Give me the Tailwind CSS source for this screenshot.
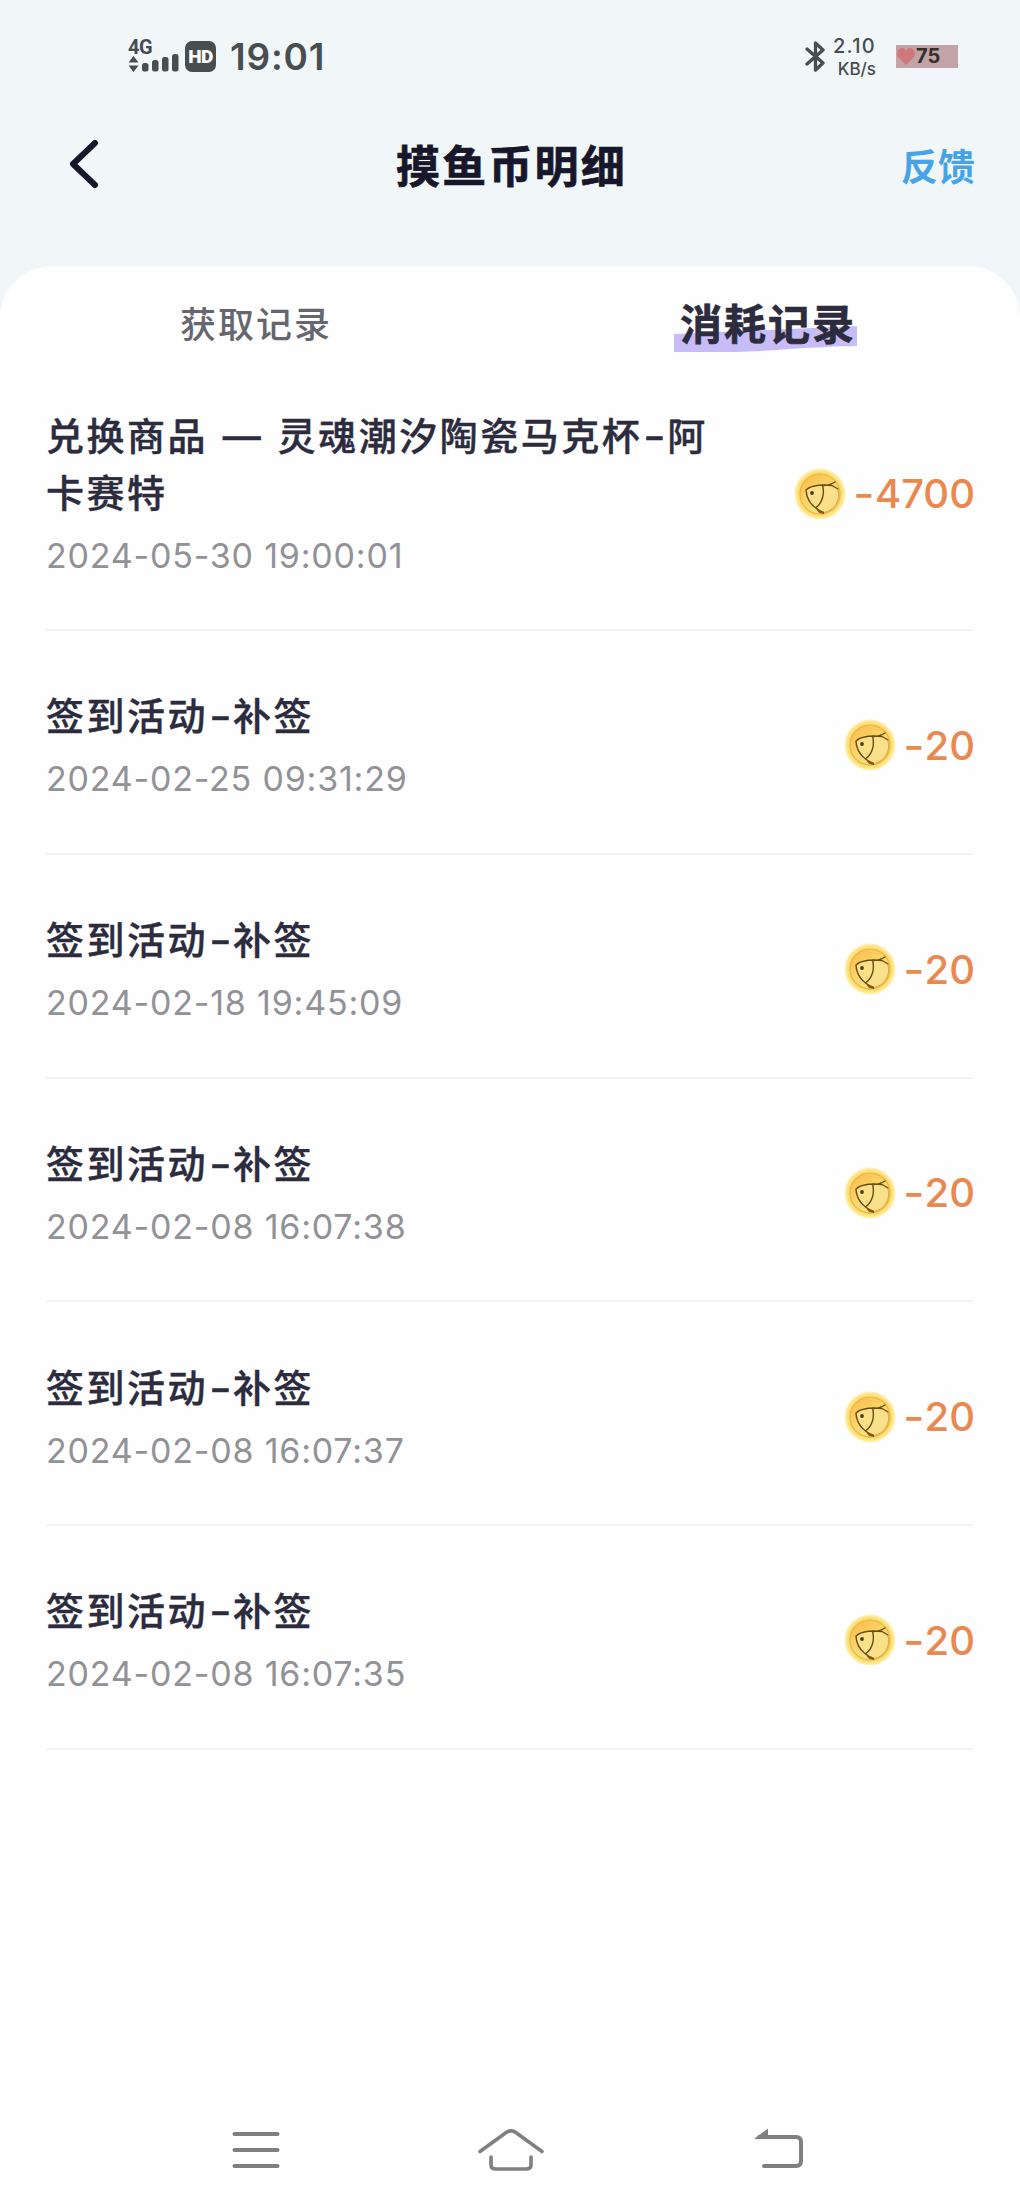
<!DOCTYPE html>
<html lang="zh-CN">
<head>
<meta charset="utf-8">
<title>摸鱼币明细</title>
<script src="https://cdn.jsdelivr.net/npm/@tailwindcss/browser@4"></script>
</head>
<body class="w-[1020px] h-[2210px] overflow-hidden bg-[#f1f6f9] font-['Inter','Noto_Sans_CJK_SC',sans-serif] text-[#2c2c3e]">
<svg class="absolute size-0">
  <defs>
    <radialGradient id="rim"><stop offset=".76" stop-color="#f7d55c"/><stop offset=".88" stop-color="#fce27c"/><stop offset="1" stop-color="#fff4be"/></radialGradient>
    <linearGradient id="face" x1="0" y1="0" x2=".6" y2="1"><stop offset="0" stop-color="#fbbb46"/><stop offset=".45" stop-color="#fbd063"/><stop offset="1" stop-color="#fbe58c"/></linearGradient>
    <symbol id="coin" viewBox="0 0 52 52">
      <circle cx="26" cy="26" r="25.5" fill="url(#rim)"/>
      <circle cx="26" cy="26" r="20" fill="url(#face)" stroke="#e9b548" stroke-width="1.2"/>
      <path d="M12 21C18 16 30 16 41 18C49 30 40 43 29 44C20 40 13 31 12 21Z" fill="#fbe08a"/>
      <path d="M29.500 44.500C19 40 12.500 32 12 22C18 16.500 31 16.500 38 17.500L44 21M28.500 17C31 26 28 35 22 39.500M28.500 17.500C34 17.500 38 16 41 14" fill="none" stroke="#6b4a14" stroke-width="1.4" stroke-linecap="round" stroke-linejoin="round"/>
      <path d="M23 41.500L30 45.500L25 44.500Z" fill="#8a5a14" stroke="#8a5a14"/>
      <path d="M44 22C47 32 40 43 30 44.500" fill="none" stroke="#dba544" stroke-width="1"/>
      <circle cx="18" cy="25" r="1.900" fill="#4d3a1c"/>
    </symbol>
  </defs>
</svg>

<header class="h-[266px]">
  <div class="flex h-[113px] items-center pl-[128px] pr-[62px] text-[#484d50]">
    <div class="flex h-9 w-[51px] flex-col">
      <span class="text-[20px] leading-[16px] font-bold tracking-tight font-['Roboto']">4G</span>
      <svg class="mt-px h-[18px] w-[51px] overflow-visible" viewBox="0 0 51 18" fill="currentColor"><path d="M5.500 0L10.500 6.500H.5ZM5.500 16L.5 9.500H10.500Z"/><rect x="14" y="7" width="6.500" height="8.500" rx="2.500"/><rect x="24" y="4" width="6.500" height="11.500" rx="2.500"/><rect x="34" y="1" width="6.500" height="14.500" rx="2.500"/><rect x="44" y="-2" width="6.500" height="17.500" rx="2.500"/></svg>
    </div>
    <span class="ml-1.5 flex h-[31px] w-[31px] items-center justify-center rounded-[7px] bg-[#484d50] text-[19px] font-black leading-none tracking-[-0.5px] text-white font-['Roboto']">HD</span>
    <span class="ml-[14px] text-[37px] leading-none font-semibold tracking-[0.8px]">19:01</span>
    <svg class="ml-auto h-[31px] w-5" viewBox="0 0 20 31" fill="none" stroke="currentColor" stroke-width="3.300" stroke-linejoin="round" stroke-linecap="round"><path d="M2 8L18 22L10.500 29V2L18 9L2 23"/></svg>
    <div class="ml-1.5 flex w-[45px] flex-col items-end font-medium">
      <span class="text-[20px] leading-[24px] tracking-[1.3px]">2.10</span>
      <span class="text-[17px] leading-[22px]">KB/s</span>
    </div>
    <div class="ml-5 flex h-[23px] w-[62px] items-center bg-[#c2a3a6] text-[#352e31]">
      <svg class="ml-px h-[17px] w-[18px]" viewBox="0 0 18 17" fill="#cf777b"><path d="M9 17L1 9C-1 5 1 0 5 0Q8 0 9 3Q10 0 13 0C17 0 19 5 17 9Z"/></svg>
      <span class="mb-0.5 ml-px text-[20px] leading-none font-bold">75</span>
    </div>
  </div>
  <div class="grid h-[108px] grid-cols-[1fr_auto_1fr] items-center pl-[68px] pr-[45px]">
    <svg class="h-12 w-[75px] -mt-1.5" viewBox="0 0 75 48" fill="none" stroke="#17162b" stroke-width="6" stroke-linecap="round" stroke-linejoin="round"><path d="M27 3L5 24L27 45"/></svg>
    <h1 class="-ml-[20px] text-[44px] leading-none font-bold tracking-[2.2px] text-[#17162b] [-webkit-text-stroke:0.7px]">摸鱼币明细</h1>
    <a class="justify-self-end text-[37px] leading-none font-bold text-[#47a3e8]">反馈</a>
  </div>
</header>

<main class="h-[1944px] rounded-t-[52px] bg-[#fefefe]">
  <nav class="grid h-[113px] grid-cols-2 items-center pt-[5px] text-center">
    <span class="pl-0.5 text-[36px] leading-[54px] font-medium tracking-[2px] text-[#66666f]">获取记录</span>
    <span class="relative justify-self-center pl-1.5">
      <svg class="absolute left-0 top-[31px] h-[27px] w-[184px]" viewBox="0 0 184 27"><path d="M0 8L183 0V20C130 21 100 25 62 26H0Z" fill="#c8bcf8"/></svg>
      <b class="relative text-[42px] leading-[60px] font-bold tracking-[2px] [-webkit-text-stroke:0.7px]">消耗记录</b>
    </span>
  </nav>
  <ul id="records" class="px-[46px]"></ul>
  <div class="mt-[355px] flex h-[90px] items-center pl-[232px] text-[#808080]">
    <svg class="h-10 w-12" viewBox="0 0 48 40" fill="none" stroke="currentColor" stroke-width="4" stroke-linecap="round"><path d="M2.500 4H45.500M2.500 20H45.500M2.500 36H45.500"/></svg>
    <svg class="ml-[198px] h-[42px] w-[66px]" viewBox="0 0 66 42" fill="none" stroke="currentColor" stroke-width="3.600" stroke-linecap="round"><path d="M2 23.500L28.500 4.300Q33 1.300 37.500 4.300L64 23.500M13 29V37Q13 41 18 41H48Q53 41 53 37V29" transform="translate(0 -1)"/></svg>
    <svg class="ml-[210px] h-[40px] w-[49px] overflow-visible" viewBox="0 0 49 40" fill="none" stroke="currentColor" stroke-width="4" stroke-linecap="round"><path d="M5 7H42Q47 7 47 12V31Q47 36 42 36H10"/><path d="M0 9L14 -1.500V9Z" fill="currentColor" stroke="none"/></svg>
  </div>
</main>

<script>
const records = [
  ['兑换商品 — 灵魂潮汐陶瓷马克杯-阿卡赛特', '2024-05-30 19:00:01', '4700'],
  ['签到活动-补签', '2024-02-25 09:31:29', '20'],
  ['签到活动-补签', '2024-02-18 19:45:09', '20'],
  ['签到活动-补签', '2024-02-08 16:07:38', '20'],
  ['签到活动-补签', '2024-02-08 16:07:37', '20'],
  ['签到活动-补签', '2024-02-08 16:07:35', '20'],
];
const dash = '<span class="inline-block w-[25px] text-center scale-x-[1.3] tracking-normal">-</span>';
document.getElementById('records').innerHTML = records.map(([title, time, amount], i) => `
  <li class="flex items-center justify-between border-b-2 border-[#f4f4f6] pb-[48px] ${i ? 'h-[223.75px] pt-[57px]' : 'h-[252px] pt-[29px]'}">
    <div class="w-[680px]">
      <p class="text-[38px] leading-[57px] font-medium tracking-[2.500px] [word-spacing:2px] [-webkit-text-stroke:0.4px]">${title.replace('-', dash)}</p>
      <time class="mt-[9px] block text-[34px] leading-[50px] tracking-[0.8px] text-[#929296]">${time}</time>
    </div>
    <div class="-mr-px flex items-center -mt-0.5">
      <svg class="size-[52px]"><use href="#coin"/></svg>
      <span class="ml-[7px] flex text-[40px] leading-[57px] font-medium text-[#e9884f]"><span class="w-[22px] scale-x-[1.15] text-center">-</span>${amount}</span>
    </div>
  </li>`).join('');
</script>
</body>
</html>
